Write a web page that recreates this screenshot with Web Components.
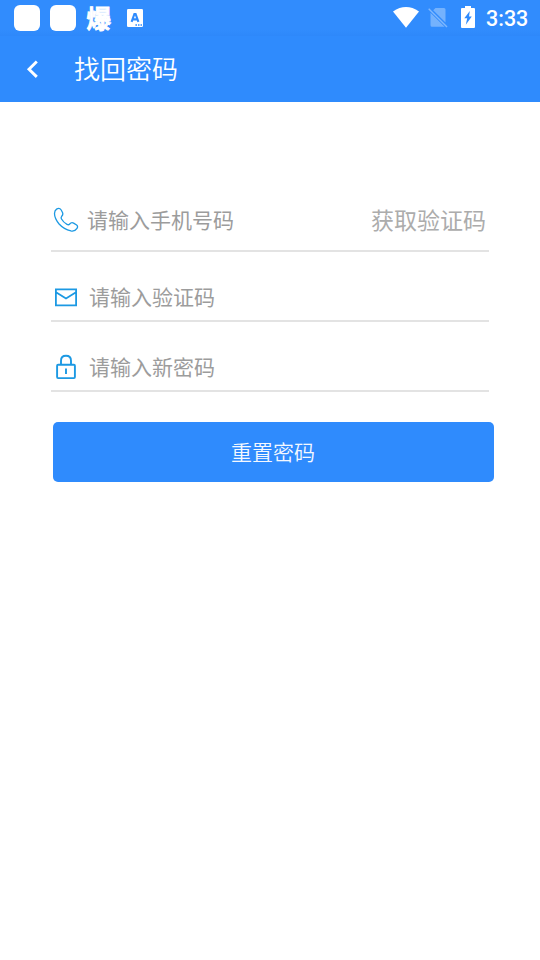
<!DOCTYPE html>
<html lang="zh-CN">
<head>
<meta charset="utf-8">
<title>找回密码</title>
<style>
html,body{margin:0;background:#fff}
body{width:540px;height:960px;overflow:hidden;font-family:"Noto Sans CJK SC",sans-serif}
</style>
</head>
<body>
<reset-page></reset-page>
<script>
const define = (name, markup) => customElements.define(name, class extends HTMLElement {
  constructor() {
    super();
    this.attachShadow({mode: 'open'}).innerHTML = markup;
  }
});

define('status-bar', `
<style>
:host{display:flex;align-items:center;height:36px;padding:0 12px 0 14px;box-sizing:border-box;color:#fff;background:linear-gradient(#318cfd 0 30px,#2e88fa)}
.tile{width:26px;height:26px;border-radius:6px;background:#fff;margin-right:10px}
.burst{width:26px;height:36px;font-weight:700;font-size:24.5px;line-height:36px;-webkit-text-stroke:.9px #fff;text-indent:.5px;margin-right:15px}
svg{display:block;flex:none}
.wifi{margin:0 9px 2px auto}
.sim{margin:0 13px 1px 0}
.battery{margin:0 11px 2px 0}
time{font:500 21.5px/34px Roboto,sans-serif;padding-top:1px;height:34px;width:42px;white-space:nowrap}
</style>
<i class="tile"></i><i class="tile"></i><span class="burst">爆</span>
<svg width="16" height="18" viewBox="0 0 16 18"><rect width="16" height="18" rx="1.3" fill="#fff"/><path d="M4.6 12.8 7.4 5h1.2l2.8 7.8M5.6 10.4h4.8" fill="none" stroke="#2f8bfd" stroke-width="2.1"/><path d="M8.4 16h1.6m1 0h1.5m1 0h1.5" stroke="#2f8bfd" stroke-width="1.5"/></svg>
<svg class="wifi" width="26" height="21" viewBox="0 0 26 21"><path d="M0 4.4Q13-4.2 26 4.4L13 20.8Z" fill="#fff"/></svg>
<svg class="sim" width="20" height="21" viewBox="0 0 20 21"><path d="M7.5 1H16q1.5 0 1.5 1.5V15.5L5.2 3.3ZM2.5 5.8 16.6 19.8H4q-1.5 0-1.5-1.5Z" fill="#fff" opacity=".33"/><path d="M.7 1.7 19 20" stroke="#fff" stroke-width="1.4" opacity=".38"/></svg>
<svg class="battery" width="14" height="22" viewBox="0 0 14 22"><path d="M4 0h6v2h3q1 0 1 1v18q0 1-1 1H1q-1 0-1-1V3q0-1 1-1h3Z" fill="#fff"/><path d="M8.8 5 3.3 12.2h2.9L4.8 18.8 10.8 10.4H8Z" fill="#2f8bfd"/></svg>
<time>3:33</time>`);

define('title-bar', `
<style>
:host{display:flex;align-items:center;height:66px;padding-left:26px;box-sizing:border-box;background:#2f8bfd;color:#fff}
svg{margin-right:35px}
h1{margin:0 0 2px;font-size:26px;line-height:38px;font-weight:350}
</style>
<svg width="13" height="20" viewBox="0 0 13 20"><path d="M10.8 2.5 3 10.2l7.8 7.7" fill="none" stroke="#fff" stroke-width="2.9"/></svg>
<h1><slot></slot></h1>`);

define('form-row', `
<style>
:host{display:flex;align-items:center;height:70px;padding:20px 3px 0 2px;box-sizing:border-box;border-bottom:2px solid #e3e3e3;color:#9c9c9c;font-size:21px;line-height:30px}
::slotted(svg){flex:none;display:block;margin-top:var(--drop,1px)}
span{margin-left:var(--gap,10px)}
.action{margin-left:auto;font-size:23px;color:#acacac}
</style>
<slot name="icon"></slot><span><slot></slot></span><div class="action"><slot name="action"></slot></div>`);

define('primary-button', `
<style>
:host{display:flex;align-items:center;justify-content:center;height:60px;padding:0 1px 2px 0;box-sizing:border-box;border-radius:5px;background:#2f8bfd;color:#f4f8ff;font-size:21px;font-weight:350}
</style><slot></slot>`);

define('reset-page', `
<style>
:host{display:block}
main{padding:0 51px}
.phone{--gap:8px;--drop:2px;height:150px;padding-top:86px}
primary-button{margin:30px -5px 0 2px}
svg{fill:none;stroke:#1c99e3}
</style>
<status-bar></status-bar>
<title-bar>找回密码</title-bar>
<main>
<form-row class="phone">
<svg slot="icon" width="26" height="26" viewBox="0 0 26 26" stroke-width="1.3"><path d="M3.6 2.1Q6.4.3 8.2 3L9.5 5.5Q10.4 7.5 8.7 9.3 7.7 10.6 8.5 12 10.5 15.5 14 17.4 15.6 18.3 16.7 17 18.5 14.8 20.6 16.1L23.6 18Q25.3 19.4 24 21.3 21.8 24.7 17.9 23.9 10.9 22.3 6.1 17 1.4 11.5 1.5 6.4 1.6 3.5 3.6 2.1Z"/></svg>
请输入手机号码<span slot="action">获取验证码</span></form-row>
<form-row>
<svg slot="icon" width="26" height="26" viewBox="0 0 26 26" stroke-width="1.8"><path d="M2.9 5.4H23.1V21.3H2.9ZM3 8.2 13 14.5 23 8.2"/></svg>
请输入验证码</form-row>
<form-row>
<svg slot="icon" width="26" height="26" viewBox="0 0 26 26" stroke-width="1.9"><rect x="4.1" y="10.7" width="17.8" height="13.4" rx="1"/><path d="M8 10.7V6.8Q8 1.8 13 1.8T18 6.8V10.7M13 14.4V20"/></svg>
请输入新密码</form-row>
<primary-button>重置密码</primary-button>
</main>`);
</script>
</body>
</html>
